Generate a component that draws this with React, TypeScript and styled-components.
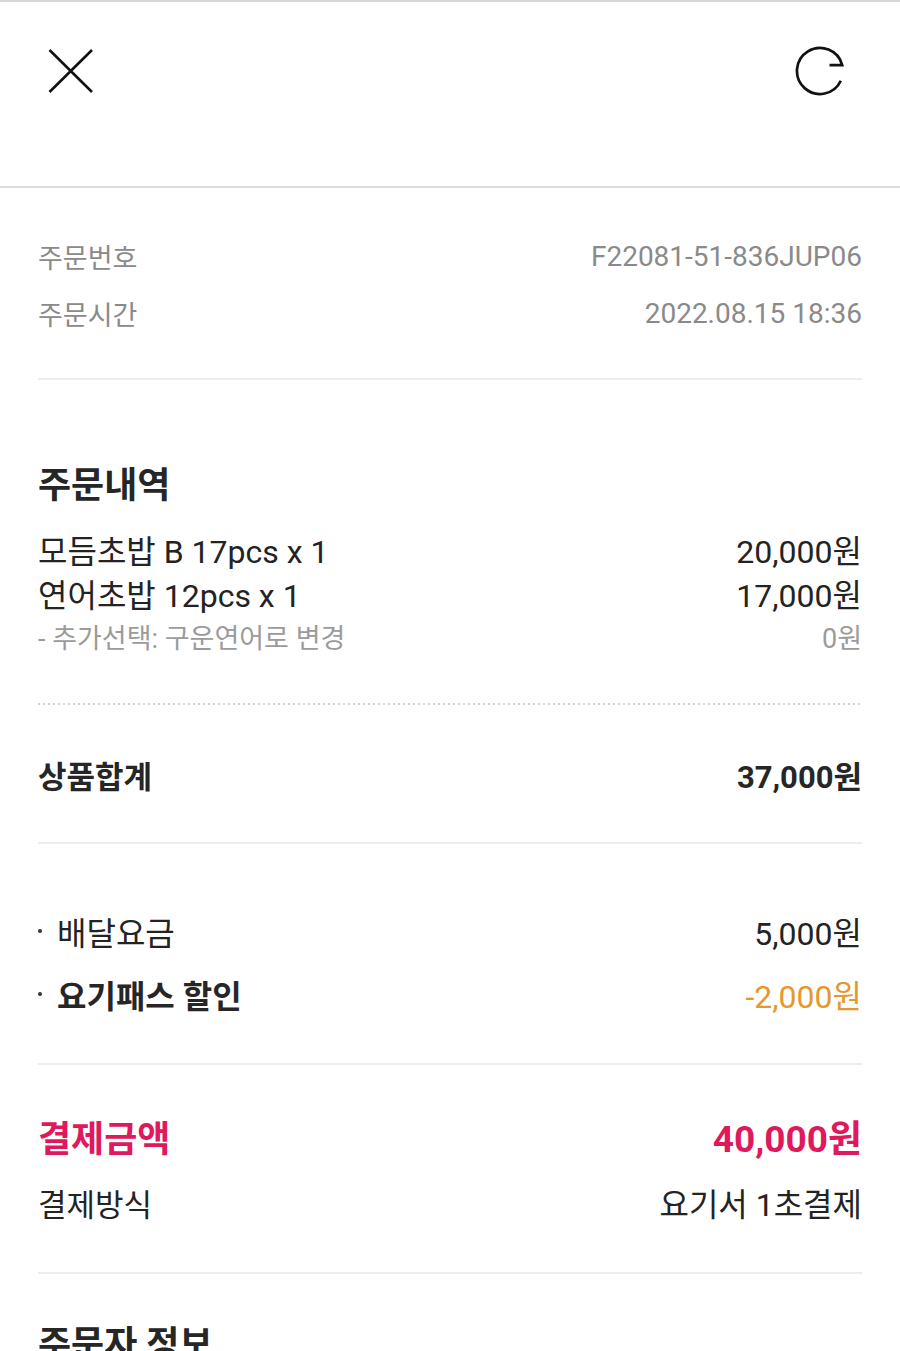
import React from "react";
import styled, { createGlobalStyle } from "styled-components";

const GlobalStyle = createGlobalStyle`
  * { box-sizing: border-box; }
  body {
    margin: 0;
    background: #ffffff;
    font-family: Roboto, "Noto Sans CJK KR", "Noto Sans", sans-serif;
    color: #222222;
    -webkit-font-smoothing: antialiased;
  }
`;

const Page = styled.div`
  width: 900px;
  background: #ffffff;
`;

const TopBar = styled.header`
  height: 188px;
  border-top: 2px solid #d6d6d6;
  border-bottom: 2px solid #dcdcdc;
  padding: 43px 54px 0 45px;
  display: flex;
  justify-content: space-between;
  align-items: flex-start;
`;

const IconButton = styled.button`
  width: 52px;
  height: 52px;
  padding: 0;
  border: 0;
  background: transparent;
  display: flex;
  align-items: center;
  justify-content: center;
  cursor: pointer;
  color: #111111;
`;

const Body = styled.main`
  padding: 0 38px;
`;

const Section = styled.section<{ $top: number; $bottom: number }>`
  padding-top: ${(p) => p.$top}px;
  padding-bottom: ${(p) => p.$bottom}px;
  display: flex;
  flex-direction: column;
`;

const Rule = styled.hr`
  margin: 0;
  border: 0;
  height: 2px;
  background: #ededed;
`;

const DottedRule = styled.div`
  height: 2px;
  background-image: linear-gradient(to right, #d2d2d2 2px, transparent 2px);
  background-size: 5px 2px;
  background-repeat: repeat-x;
`;

const Row = styled.div<{ $h: number; $gap?: number }>`
  display: flex;
  justify-content: space-between;
  align-items: center;
  height: ${(p) => p.$h}px;
  margin-top: ${(p) => p.$gap ?? 0}px;
`;

type Tone = "muted" | "plain" | "strong" | "faint" | "accent" | "discount";

const toneColor: Record<Tone, string> = {
  muted: "#8a8a8a",
  plain: "#232323",
  strong: "#262626",
  faint: "#9b9b9b",
  accent: "#e0185c",
  discount: "#e5982c",
};

const Text = styled.span<{ $size: number; $tone: Tone; $bold?: boolean }>`
  font-size: ${(p) => p.$size}px;
  font-weight: ${(p) => (p.$bold ? 700 : 400)};
  color: ${(p) => toneColor[p.$tone]};
  white-space: nowrap;
  display: inline-flex;
  align-items: center;
`;

const Heading = styled.h2<{ $tone?: Tone }>`
  margin: 0;
  height: 50px;
  line-height: 50px;
  font-size: 36px;
  font-weight: 700;
  color: ${(p) => toneColor[p.$tone ?? "strong"]};
`;

const Bullet = styled.i`
  width: 4px;
  height: 4px;
  border-radius: 50%;
  background: #333333;
  margin: 0 15px 0 0;
  flex: none;
`;

const CloseIcon = () => (
  <svg width="52" height="52" viewBox="0 0 52 52" fill="none">
    <path d="M4.5 5L47 47M47 5L4.5 47" stroke="currentColor" strokeWidth="2.6" />
  </svg>
);

const RefreshIcon = () => (
  <svg width="52" height="52" viewBox="0 0 52 52" fill="none">
    <path
      d="M46.8 35.7A23 23 0 1 1 48.2 20.1H35.5"
      stroke="currentColor"
      strokeWidth="2.7"
      strokeLinejoin="miter"
    />
  </svg>
);

const items = [
  { name: "모듬초밥 B 17pcs x 1", price: "20,000원" },
  { name: "연어초밥 12pcs x 1", price: "17,000원" },
];

export default function App() {
  return (
    <Page>
      <GlobalStyle />
      <TopBar>
        <IconButton aria-label="닫기">
          <CloseIcon />
        </IconButton>
        <IconButton aria-label="새로고침">
          <RefreshIcon />
        </IconButton>
      </TopBar>

      <Body>
        <Section $top={40} $bottom={36}>
          <Row $h={57}>
            <Text $size={27} $tone="muted">주문번호</Text>
            <Text $size={28} $tone="muted">F22081-51-836JUP06</Text>
          </Row>
          <Row $h={57}>
            <Text $size={27} $tone="muted">주문시간</Text>
            <Text $size={28} $tone="muted">2022.08.15 18:36</Text>
          </Row>
        </Section>
        <Rule />

        <Section $top={81} $bottom={46}>
          <Heading>주문내역</Heading>
          {items.map((it, i) => (
            <Row key={it.name} $h={44} $gap={i === 0 ? 16 : 0}>
              <Text $size={32} $tone="plain">{it.name}</Text>
              <Text $size={32} $tone="plain">{it.price}</Text>
            </Row>
          ))}
          <Row $h={42}>
            <Text $size={27} $tone="faint">- 추가선택: 구운연어로 변경</Text>
            <Text $size={27} $tone="faint">0원</Text>
          </Row>
        </Section>
        <DottedRule />

        <Section $top={44} $bottom={43}>
          <Row $h={50}>
            <Text $size={31} $tone="strong" $bold>상품합계</Text>
            <Text $size={31} $tone="strong" $bold>37,000원</Text>
          </Row>
        </Section>
        <Rule />

        <Section $top={62} $bottom={44}>
          <Row $h={50}>
            <Text $size={32} $tone="plain">
              <Bullet />
              배달요금
            </Text>
            <Text $size={32} $tone="plain">5,000원</Text>
          </Row>
          <Row $h={50} $gap={13}>
            <Text $size={32} $tone="strong" $bold>
              <Bullet />
              요기패스 할인
            </Text>
            <Text $size={32} $tone="discount">-2,000원</Text>
          </Row>
        </Section>
        <Rule />

        <Section $top={46} $bottom={45}>
          <Row $h={50}>
            <Text $size={36} $tone="accent" $bold>결제금액</Text>
            <Text $size={37} $tone="accent" $bold>40,000원</Text>
          </Row>
          <Row $h={50} $gap={16}>
            <Text $size={31} $tone="plain">결제방식</Text>
            <Text $size={32} $tone="plain">요기서 1초결제</Text>
          </Row>
        </Section>
        <Rule />

        <Section $top={46} $bottom={40}>
          <Heading>주문자 정보</Heading>
        </Section>
      </Body>
    </Page>
  );
}
